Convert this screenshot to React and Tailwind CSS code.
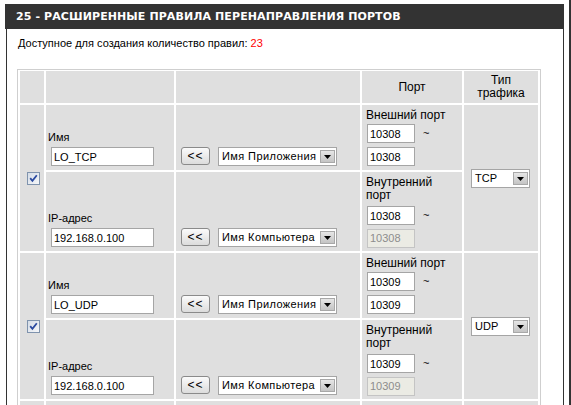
import React from "react";

function TextInput({ value, w = "w-[48px]", disabled = false, className = "" }) {
  return (
    <input
      readOnly
      value={value}
      disabled={disabled}
      className={`${w} h-[19px] border px-[2px] text-[11px] leading-none outline-none ${
        disabled
          ? "bg-[#ebebe4] border-[#c4c4c4] text-[#8d8d8d]"
          : "bg-white border-[#a5a5a5] text-black"
      } ${className}`}
    />
  );
}

function Arrow() {
  return (
    <div className="w-[15px] h-[13px] shrink-0 border border-[#a8a8a8] bg-gradient-to-b from-[#e6e6e6] to-[#c4c4c4] flex items-end justify-center pb-[3px]">
      <svg width="7" height="4" viewBox="0 0 7 4">
        <path d="M0 0H7L3.5 4Z" fill="#000" />
      </svg>
    </div>
  );
}

function Select({ value, w, size = "text-[11px] tracking-[0.4px]" }) {
  return (
    <div
      className={`${w} h-[19px] border border-[#a5a5a5] bg-white flex items-center justify-between pl-[3px] pr-[1px] ${size} leading-none whitespace-nowrap`}
    >
      <span>{value}</span>
      <Arrow />
    </div>
  );
}

function Checkbox() {
  return (
    <svg width="13" height="13" viewBox="0 0 13 13">
      <defs>
        <linearGradient id="cbg" x1="0" y1="0" x2="1" y2="1">
          <stop offset="0" stopColor="#d3dbe6" />
          <stop offset="1" stopColor="#f7f8fa" />
        </linearGradient>
      </defs>
      <rect x="0.5" y="0.5" width="12" height="12" fill="url(#cbg)" stroke="#7f93ad" />
      <path d="M3.2 6.2 L5.4 8.8 L9.8 3.2" fill="none" stroke="#2a4aa0" strokeWidth="1.8" />
    </svg>
  );
}

function Btn() {
  return (
    <div className="mb-[1px] w-[29px] h-[18px] rounded-[3px] border border-[#8a8a8a] bg-gradient-to-b from-[#fbfbfb] to-[#dcdcdc] flex items-center justify-center text-[12px] leading-none tracking-[1px]">
      &lt;&lt;
    </div>
  );
}

const cell = "bg-[#dfdfdf]";

function Rule({ name, port, proto }) {
  return (
    <>
      <div className={`${cell} row-span-2 flex items-center pl-[7px]`}>
        <Checkbox />
      </div>
      <div className={`${cell} flex flex-col justify-end pb-[4px] pl-[2px]`}>
        <div className="text-[11px] leading-[14px]">Имя</div>
        <TextInput value={name} w="w-[103px]" className="mt-[3px] ml-[3px]" />
      </div>
      <div className={`${cell} flex items-end gap-[8px] pb-[4px] pl-[5px]`}>
        <Btn />
        <Select value="Имя Приложения" w="w-[119px]" />
      </div>
      <div className={`${cell} pl-[4px] pt-[3px]`}>
        <div className="text-[12px] leading-[14px]">Внешний порт</div>
        <div className="mt-[2px] flex items-center">
          <TextInput value={port} className="ml-[1px]" />
          <span className="ml-[8px] text-[11px]">~</span>
        </div>
        <TextInput value={port} className="mt-[4px] ml-[1px]" />
      </div>
      <div className={`${cell} row-span-2 flex items-center pl-[7px]`}>
        <Select value={proto} w="w-[59px]" size="text-[11px]" />
      </div>
      <div className={`${cell} flex flex-col justify-end pb-[4px] pl-[2px]`}>
        <div className="text-[11px] leading-[14px]">IP-адрес</div>
        <TextInput value="192.168.0.100" w="w-[103px]" className="mt-[3px] ml-[3px]" />
      </div>
      <div className={`${cell} flex items-end gap-[8px] pb-[4px] pl-[5px]`}>
        <Btn />
        <Select value="Имя Компьютера" w="w-[119px]" />
      </div>
      <div className={`${cell} pl-[4px] pt-[4px]`}>
        <div className="text-[12px] leading-[13px]">
          Внутренний
          <br />
          порт
        </div>
        <div className="mt-[4px] flex items-center">
          <TextInput value={port} className="ml-[1px]" />
          <span className="ml-[8px] text-[11px]">~</span>
        </div>
        <TextInput value={port} disabled className="mt-[3px] ml-[1px]" />
      </div>
    </>
  );
}

export default function App() {
  return (
    <div className="h-[405px] w-[571px] overflow-hidden bg-white flex font-['Liberation_Sans',Arial,sans-serif] text-black">
      <div className="ml-[5px] mt-[4px] w-[559px] flex flex-col">
        <div className="h-[25px] shrink-0 bg-[#333333] flex items-center pl-[11px] text-white font-bold text-[11px] leading-none font-['DejaVu_Sans',sans-serif] tracking-[0.1px]">
          25 - РАСШИРЕННЫЕ ПРАВИЛА ПЕРЕНАПРАВЛЕНИЯ ПОРТОВ
        </div>
        <div className="flex-1 ml-[1px] border-l border-r border-[#333333]">
          <div className="pt-[7px] pl-[11px] text-[11px] leading-[14px]">
            Доступное для создания количество правил:{" "}
            <span className="text-[#ff0000]">23</span>
          </div>
          <div className="mt-[19px] ml-[10px] w-[524px] border border-[#cfcfcf] p-[2px] pt-[1px] bg-white">
            <div className="grid grid-cols-[24px_128px_184px_100px_74px] grid-rows-[32px_65px_79px_65px_79px_65px] gap-[2px]">
              <div className={cell} />
              <div className={cell} />
              <div className={cell} />
              <div className={`${cell} flex items-center justify-center text-[12px]`}>Порт</div>
              <div className={`${cell} flex flex-col items-center justify-center text-center text-[12px] leading-[13px]`}>
                <span>Тип</span>
                <span>трафика</span>
              </div>
              <Rule name="LO_TCP" port="10308" proto="TCP" />
              <Rule name="LO_UDP" port="10309" proto="UDP" />
              <div className={cell} />
              <div className={cell} />
              <div className={cell} />
              <div className={cell} />
              <div className={cell} />
            </div>
          </div>
        </div>
      </div>
      <div className="ml-[5px] w-[2px] h-full bg-[#333333]" />
    </div>
  );
}
